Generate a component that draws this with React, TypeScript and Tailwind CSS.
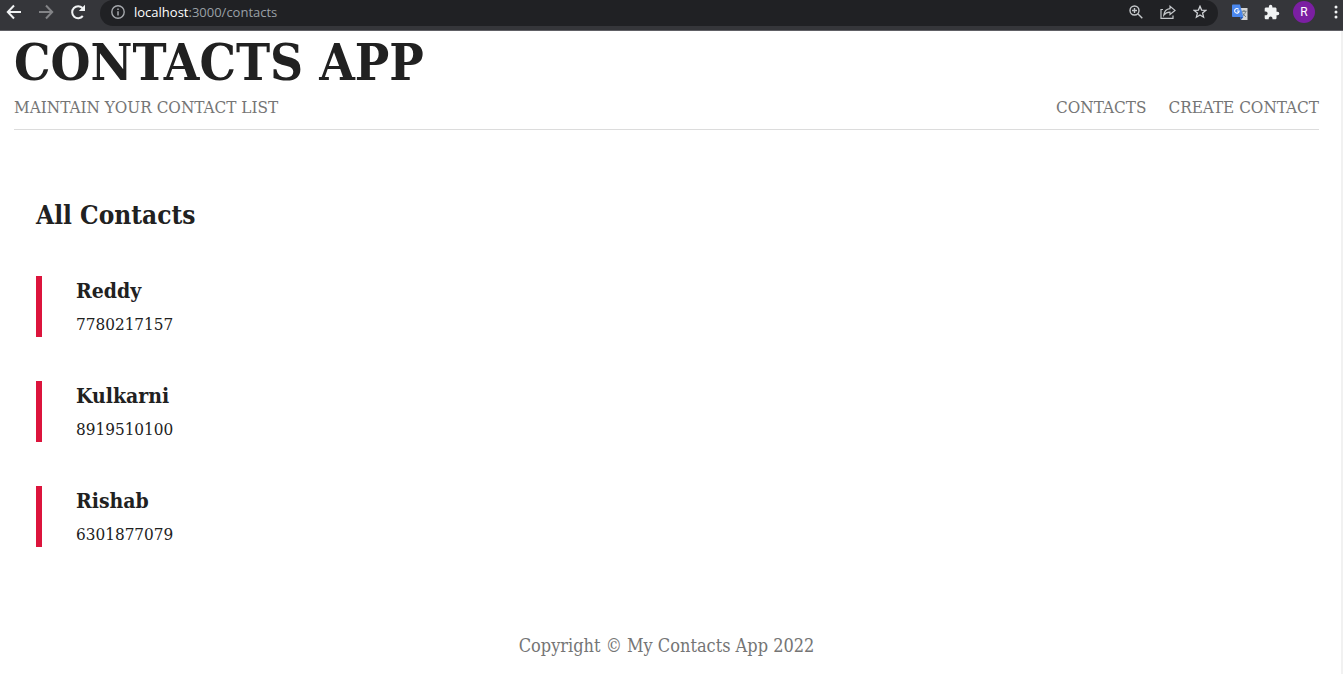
import React from "react";

const contacts = [
  { name: "Reddy", phone: "7780217157" },
  { name: "Kulkarni", phone: "8919510100" },
  { name: "Rishab", phone: "6301877079" },
];

const iconButton = "flex h-6 w-6 shrink-0 items-center justify-center";

function BrowserBar() {
  return (
    <div className="flex h-[31px] items-start border-b border-[#606065] bg-[#35363a] pl-0.5 font-['Open_Sans',sans-serif]">
      <div className="flex items-center gap-2">
        <button aria-label="Back" className={iconButton}>
          <svg width="16" height="16" viewBox="0 0 16 16" fill="none" stroke="#f1f3f4" strokeWidth="2">
            <path d="M15 8H2.5M8 1.5L1.8 8L8 14.5" />
          </svg>
        </button>
        <button aria-label="Forward" className={iconButton}>
          <svg width="16" height="16" viewBox="0 0 16 16" fill="none" stroke="#838487" strokeWidth="2">
            <path d="M1 8H13.5M8 1.5L14.2 8L8 14.5" />
          </svg>
        </button>
        <button aria-label="Reload" className={iconButton}>
          <svg width="16" height="16" viewBox="0 0 16 16">
            <path d="M12.8 12A6 6 0 1 1 12.5 4" fill="none" stroke="#f1f3f4" strokeWidth="2" />
            <path d="M15 0.8V7H8.8Z" fill="#f1f3f4" />
          </svg>
        </button>
      </div>
      <div className="ml-2.5 flex h-[26px] min-w-0 flex-1 items-start rounded-b-[13px] rounded-t-[13px] bg-[#202124] pl-1.5 pr-1.5">
        <button aria-label="Site information" className={iconButton}>
          <svg width="14" height="14" viewBox="0 0 14 14" fill="none" stroke="#a5a8ac">
            <circle cx="7" cy="7" r="6.2" strokeWidth="1.4" />
            <path d="M7 6.2V10.4M7 3.6V5" strokeWidth="1.5" />
          </svg>
        </button>
        <div className="flex min-w-0 flex-1 pl-1 text-[13px] leading-6 text-[#9aa0a6]">
          <span className="text-white">localhost</span>
          <span>:3000/contacts</span>
        </div>
        <div className="flex gap-2">
          <button aria-label="Zoom" className={iconButton}>
            <svg width="14" height="14" viewBox="0 0 14 14" fill="none" stroke="#c4c7ca" strokeWidth="1.4">
              <circle cx="5.5" cy="5.5" r="4.5" />
              <path d="M8.8 8.8L13.3 13.3M3 5.5H8M5.5 3V8" />
            </svg>
          </button>
          <button aria-label="Share" className={iconButton}>
            <svg width="16" height="14" viewBox="0 0 16 14" fill="none" stroke="#c4c7ca" strokeWidth="1.2">
              <path d="M3 4.5H1V13.3H13V10.5" />
              <path d="M10 1.3L15 5.4L10 9.5V7.2C7 7.2 5.3 8.1 3.8 10.1C4.2 6.6 6.5 4 10 3.6Z" />
            </svg>
          </button>
          <button aria-label="Bookmark" className={iconButton}>
            <svg width="14" height="14" viewBox="0 0 14 14" fill="none" stroke="#d0d3d6" strokeWidth="1.3">
              <path d="M7 1.3L8.6 5.1L12.8 5.4L9.6 8.1L10.6 12.2L7 10L3.4 12.2L4.4 8.1L1.2 5.4L5.4 5.1Z" />
            </svg>
          </button>
        </div>
      </div>
      <div className="ml-2.5 flex gap-2">
        <button aria-label="Translate" className={iconButton}>
          <svg width="16" height="17" viewBox="0 0 16 17">
            <path d="M6 4H15.5V16H9Z" fill="#d5d5d5" />
            <path d="M9.3 7.3H14.5M12 6V7.3M13.7 7.5C13 10 11.5 11.5 9.5 12.5M10.5 8.5C11.3 10.5 12.5 11.8 14 12.8" fill="none" stroke="#65747c" strokeWidth="0.9" />
            <path d="M0.8 0.5H8L11.3 13H0.8Q0 13 0 12.2V1.3Q0 0.5 0.8 0.5Z" fill="#4a88ef" />
            <path d="M8 13H11.3L9 16Z" fill="#2459b8" />
            <path d="M6.6 5.3A2.3 2.3 0 1 0 7.2 7H5" fill="none" stroke="#fff" strokeWidth="1.1" />
          </svg>
        </button>
        <button aria-label="Extensions" className={iconButton}>
          <svg width="16" height="16" viewBox="1 0 23 23" fill="#f1f3f4">
            <path d="M20.5 11H19V7c0-1.1-.9-2-2-2h-4V3.500a2.500 2.500 0 0 0-5 0V5H4c-1.100 0-1.990.9-1.990 2v3.800H3.500c1.490 0 2.700 1.210 2.700 2.700s-1.210 2.700-2.700 2.700H2V20c0 1.100.9 2 2 2h3.800v-1.500c0-1.490 1.210-2.700 2.700-2.700s2.700 1.210 2.700 2.700V22H17c1.100 0 2-.9 2-2v-4h1.500a2.500 2.500 0 0 0 0-5z" />
          </svg>
        </button>
        <button aria-label="Profile" className={iconButton}>
          <span className="flex h-[22px] w-[22px] items-center justify-center rounded-full bg-[#7b1fa2] font-['Roboto',sans-serif] text-xs text-white">R</span>
        </button>
        <button aria-label="Browser menu" className="ml-[5px] flex h-6 w-3.5 shrink-0 items-center justify-center">
          <svg width="4" height="14" viewBox="0 0 4 14" fill="#f1f3f4">
            <circle cx="2" cy="2" r="1.5" />
            <circle cx="2" cy="7" r="1.5" />
            <circle cx="2" cy="12" r="1.5" />
          </svg>
        </button>
      </div>
    </div>
  );
}

export default function App() {
  return (
    <div className="flex min-h-screen flex-col overflow-x-hidden bg-white font-['DejaVu_Serif_Condensed','DejaVu_Serif',serif] text-[17px] leading-7 text-[#212121]">
      <BrowserBar />
      <div className="flex-1 border-r-2 border-[#f1f1f1] pl-3.5 pr-[22px]">
        <header className="border-b border-[#dcdcdc] pb-2">
          <h1 className="text-[51px] font-bold leading-[62px]">CONTACTS APP</h1>
          <div className="flex items-center justify-between text-[#757575]">
            <p>MAINTAIN YOUR CONTACT LIST</p>
            <nav className="flex gap-[22px]">
              <a href="#contacts">CONTACTS</a>
              <a href="#create">CREATE CONTACT</a>
            </nav>
          </div>
        </header>
        <main className="px-[22px] pt-[67px]">
          <h2 className="text-[26px] font-bold leading-9">All Contacts</h2>
          <ul className="mt-[43px] flex flex-col gap-11">
            {contacts.map((contact) => (
              <li key={contact.phone} className="border-l-6 border-[#dc143c] pl-[34px]">
                <h3 className="pb-1 text-[21px] font-bold leading-[30px]">{contact.name}</h3>
                <p className="pt-px leading-[26px]">{contact.phone}</p>
              </li>
            ))}
          </ul>
        </main>
        <footer className="pb-3 pt-[85px] text-center text-lg leading-7 text-[#757575]">
          <p>Copyright © My Contacts App 2022</p>
        </footer>
      </div>
    </div>
  );
}
